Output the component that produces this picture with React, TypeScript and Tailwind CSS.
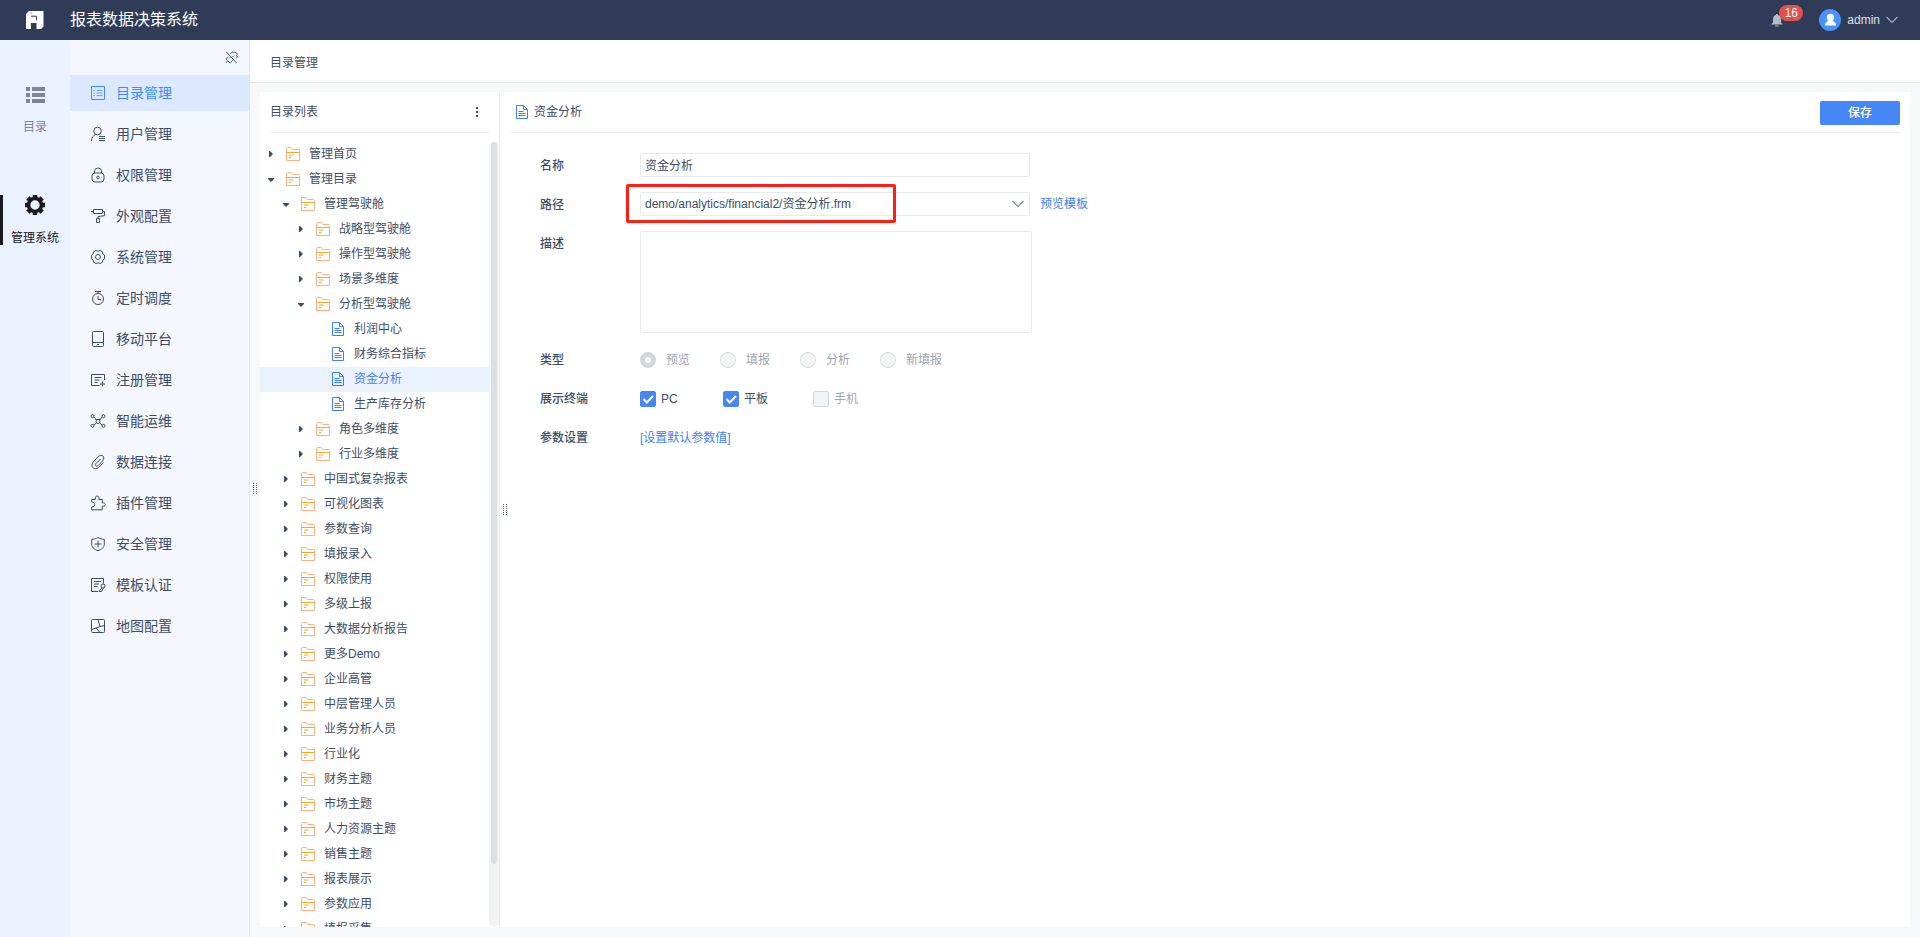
import { useState, type ReactNode } from "react";

type IconProps = { children: ReactNode; className?: string };

function Icon({ children, className = "h-[14px] w-[14px]" }: IconProps) {
  return (
    <svg
      viewBox="0 0 14 14"
      fill="none"
      stroke="currentColor"
      strokeWidth="1"
      className={`shrink-0 overflow-visible ${className}`}
      aria-hidden="true"
    >
      {children}
    </svg>
  );
}

const navItems: { label: string; icon: ReactNode }[] = [
  {
    label: "目录管理",
    icon: (
      <>
        <path d="M.5.5h13v13H.5z" />
        <path d="M2.500 4.500H4M2.500 7H4M2.500 9.500H4M5.500 4.500h6M5.500 7h6M5.500 9.500h6" opacity=".7" />
      </>
    ),
  },
  {
    label: "用户管理",
    icon: (
      <>
        <circle cx="6.500" cy="4" r="3.800" />
        <path d="M.5 14c0-3.200 1.600-5.600 4.200-6.500M8 9.500h6M8 11.500h6M8 13.500h6" />
      </>
    ),
  },
  {
    label: "权限管理",
    icon: (
      <>
        <rect x="1" y="5" width="12" height="9" rx="3" />
        <path d="M3.500 5V3.200a3.500 3.200 0 0 1 7 0V5" />
        <circle cx="7" cy="9.500" r="1.300" />
      </>
    ),
  },
  {
    label: "外观配置",
    icon: <path d="M2.500.5h9v4h-9zM0 2.500h2.500M11.500 2.500h2v4.200L7 7.500v2M5.500 9.500h3v4h-3z" />,
  },
  {
    label: "系统管理",
    icon: (
      <>
        <path d="M5 .5Q7 2 9 .5l2.500 1.300Q11.300 4.300 13.500 5.200v3.600Q11.300 9.700 11.500 12.200L9 13.500Q7 12 5 13.500L2.500 12.200Q2.700 9.700.5 8.800V5.200Q2.700 4.300 2.500 1.800z" />
        <circle cx="7" cy="7" r="2.500" />
      </>
    ),
  },
  {
    label: "定时调度",
    icon: (
      <>
        <circle cx="7" cy="8" r="5.500" />
        <path d="M4 .5h6M7 .5v2M7 5v3.500h3" />
      </>
    ),
  },
  {
    label: "移动平台",
    icon: (
      <>
        <rect x="1.500" y="-.5" width="11" height="15" rx="1" />
        <path d="M1.500 10.500h11M6 12.500h2" />
      </>
    ),
  },
  {
    label: "注册管理",
    icon: (
      <path d="M8.500 12.500H.5V1.500h13v5.500M3.500 4.500h7M3.500 7h5M3.500 9.500h3M11.500 8.500v5M9 11h5" />
    ),
  },
  {
    label: "智能运维",
    icon: (
      <>
        <circle cx="1.500" cy="2.200" r="1.500" />
        <circle cx="12.500" cy="2.200" r="1.500" />
        <circle cx="1.500" cy="11.800" r="1.500" />
        <circle cx="12.500" cy="11.800" r="1.500" />
        <circle cx="7" cy="7.500" r="2" />
        <path d="M3 3l2.500 3M11 3L8.500 6M3 11l2.500-2.200M11 11L8.500 8.800M4.500 5.500h5" />
      </>
    ),
  },
  {
    label: "数据连接",
    icon: (
      <path d="M9.500 4L5 8.600c-1.500 1.800.6 3.600 2.200 2L11.500 6C15 1.500 10.500-1.500 7 1.800L3 6c-5 5.500.5 10 4.500 6.500L12.500 7.500" />
    ),
  },
  {
    label: "插件管理",
    icon: (
      <path d="M.7 6V3.500h3.800C3.800 1.500 4.600 0 6.200 0S8.400 1.500 7.700 3.500h3.600V7c1.600-.6 2.900.1 2.900 1.500s-1.300 2.100-2.900 1.500v3.800H.7v-3c2 .3 3-.6 3-2.200S2.700 5.800.7 6z" />
    ),
  },
  {
    label: "安全管理",
    icon: (
      <path d="M7 .5c2 1.300 4 1.700 6.300 1.800v5c0 3-2.500 5.200-6.300 6.400C3.200 12.500.7 10.300.7 7.300v-5C3 2.200 5 1.800 7 .5zM7 3.500v7M3.500 7h7" />
    ),
  },
  {
    label: "模板认证",
    icon: (
      <>
        <path d="M7 13.500H.5V.5h12v5M3 3.500h7M3 6h5M3 8.500h3.500" />
        <circle cx="12" cy="8" r="2" />
        <path d="M10.800 9.800L8 13.500h2.500l2-3.500" />
      </>
    ),
  },
  {
    label: "地图配置",
    icon: (
      <>
        <rect x=".5" y=".5" width="13" height="13" rx="1" />
        <path d="M7 .5L9 7.500M.5 10.500L5 9l4-1.500 4.500-1M5 9l4 4.500" />
      </>
    ),
  },
];

type TreeNode = {
  label: string;
  level: number;
  kind: "open" | "closed" | "file";
};

const treeNodes: TreeNode[] = [
  { label: "管理首页", level: 0, kind: "closed" },
  { label: "管理目录", level: 0, kind: "open" },
  { label: "管理驾驶舱", level: 1, kind: "open" },
  { label: "战略型驾驶舱", level: 2, kind: "closed" },
  { label: "操作型驾驶舱", level: 2, kind: "closed" },
  { label: "场景多维度", level: 2, kind: "closed" },
  { label: "分析型驾驶舱", level: 2, kind: "open" },
  { label: "利润中心", level: 3, kind: "file" },
  { label: "财务综合指标", level: 3, kind: "file" },
  { label: "资金分析", level: 3, kind: "file" },
  { label: "生产库存分析", level: 3, kind: "file" },
  { label: "角色多维度", level: 2, kind: "closed" },
  { label: "行业多维度", level: 2, kind: "closed" },
  { label: "中国式复杂报表", level: 1, kind: "closed" },
  { label: "可视化图表", level: 1, kind: "closed" },
  { label: "参数查询", level: 1, kind: "closed" },
  { label: "填报录入", level: 1, kind: "closed" },
  { label: "权限使用", level: 1, kind: "closed" },
  { label: "多级上报", level: 1, kind: "closed" },
  { label: "大数据分析报告", level: 1, kind: "closed" },
  { label: "更多Demo", level: 1, kind: "closed" },
  { label: "企业高管", level: 1, kind: "closed" },
  { label: "中层管理人员", level: 1, kind: "closed" },
  { label: "业务分析人员", level: 1, kind: "closed" },
  { label: "行业化", level: 1, kind: "closed" },
  { label: "财务主题", level: 1, kind: "closed" },
  { label: "市场主题", level: 1, kind: "closed" },
  { label: "人力资源主题", level: 1, kind: "closed" },
  { label: "销售主题", level: 1, kind: "closed" },
  { label: "报表展示", level: 1, kind: "closed" },
  { label: "参数应用", level: 1, kind: "closed" },
  { label: "填报采集", level: 1, kind: "closed" },
];

const indent = ["pl-[7px]", "pl-[22px]", "pl-[37px]", "pl-[52px]"];

function FolderIcon() {
  return (
    <Icon className="h-[14px] w-[14px] text-[#f7b27c]">
      <path d="M.5 13.500V1.500a1 1 0 0 1 1-1h3.800l1.500 2h5.700a1 1 0 0 1 1 1v10z" />
      <path d="M1 5.500h12M3 8h4.500M3 10.500h2" stroke="#f5a623" />
    </Icon>
  );
}

function FileIcon() {
  return (
    <Icon className="h-[14px] w-[14px] text-[#3f7ff5]">
      <path d="M1.500.5h7l4 4v9h-11zM8.500.5v4h4M3.500 6.500h5M3.500 8.500h7M3.500 10.500h7" />
    </Icon>
  );
}

function Caret({ kind }: { kind: TreeNode["kind"] }) {
  return (
    <svg viewBox="0 0 8 8" className="h-2 w-2 shrink-0 fill-[#3d4d66]" aria-hidden="true">
      {kind === "closed" && <path d="M2 1h1l3 3-3 3H2z" />}
      {kind === "open" && <path d="M1 3h6v1L4 7 1 4z" />}
    </svg>
  );
}

function Splitter() {
  return (
    <svg viewBox="0 0 4 12" className="h-3 w-1 fill-[#5b6780]" aria-hidden="true">
      {[0, 2, 4, 6, 8, 10].map((y) => (
        <path key={y} d={`M0 ${y}h1v1H0zM3 ${y}h1v1H3z`} />
      ))}
    </svg>
  );
}

function Header() {
  return (
    <header className="flex h-10 shrink-0 items-center bg-[#2f3b57] text-white">
      <div className="flex w-[70px] shrink-0 justify-center">
        <svg viewBox="0 0 20 20" className="h-5 w-5" aria-hidden="true">
          <path d="M4 1h14.500v15.500L16 19h-4.500v-6H6v6H1V4z" fill="#fff" />
          <path d="M6 6.200h5.500v4" fill="none" stroke="#2f3b57" strokeWidth="1" />
          <path d="M6 1v3.500" fill="none" stroke="#2f3b57" strokeWidth="1" opacity=".4" />
        </svg>
      </div>
      <h1 className="text-base">报表数据决策系统</h1>
      <div className="ml-auto flex items-center pr-[22px] text-xs">
        <button type="button" aria-label="消息" className="relative h-6 w-8">
          <svg viewBox="0 0 12 13" className="absolute top-1.5 left-0 h-[13px] w-3 fill-[#b4bbc9]" aria-hidden="true">
            <path d="M6 0c.6 0 1 .4 1 1 2 .5 3 2 3 4v3.500l1.500 1.500v.5H.5V10L2 8.500V5c0-2 1-3.500 3-4 0-.6.4-1 1-1zM4 11.500h4L7.500 12.500h-3z" />
          </svg>
          <span className="absolute -top-[3px] left-2 h-4 w-6 rounded-full bg-[#e5504d] text-center leading-4">
            16
          </span>
        </button>
        <button type="button" className="ml-4 flex items-center text-[#dfe3ec]">
          <svg viewBox="0 0 22 22" className="h-[22px] w-[22px]" aria-hidden="true">
            <circle cx="11" cy="11" r="11" fill="#4793fb" />
            <circle cx="11.500" cy="8.500" r="3.700" fill="#fff" />
            <path d="M6 16.500c0-2.600 1.500-4 3.500-4.500h4c2 .5 3.500 1.900 3.500 4.500z" fill="#fff" />
          </svg>
          <span className="ml-1.5">admin</span>
          <svg viewBox="0 0 12 8" className="ml-1.5 h-2 w-3" fill="none" stroke="#a9b1c2" aria-hidden="true">
            <path d="M.5 1L6 6.500 11.500 1" strokeWidth="1.200" />
          </svg>
        </button>
      </div>
    </header>
  );
}

function Rail() {
  return (
    <aside className="flex w-[70px] shrink-0 flex-col bg-[#eaf1ff] pt-[42px] text-xs">
      <button type="button" className="flex h-[68px] flex-col items-center pt-[5px] text-[#7f8592]">
        <svg viewBox="0 0 19 16" className="h-4 w-[19px] fill-[#7f8592]" aria-hidden="true">
          <path d="M0 0h4v4H0zM6 0h13v4H6zM0 6h4v4H0zM6 6h13v4H6zM0 12h4v4H0zM6 12h13v4H6z" />
        </svg>
        <span className="mt-4">目录</span>
      </button>
      <button
        type="button"
        className="mt-[45px] flex h-[50px] flex-col items-center border-l-[3px] border-[#1a1a1a] pr-[3px] text-[#1a1a1a]"
      >
        <svg viewBox="0 0 20 20" className="h-5 w-5 shrink-0" aria-hidden="true">
          <circle cx="10" cy="10" r="6.500" fill="none" stroke="#1a1a1a" strokeWidth="3.600" />
          <path
            d="M10 0v4M10 16v4M0 10h4M16 10h4M2.900 2.900l2.500 2.500M14.600 14.600l2.500 2.500M2.900 17.100l2.500-2.500M14.600 5.400l2.500-2.500"
            stroke="#1a1a1a"
            strokeWidth="4.500"
          />
        </svg>
        <span className="mt-[15px]">管理系统</span>
      </button>
    </aside>
  );
}

function Nav() {
  return (
    <nav className="relative flex w-[180px] shrink-0 flex-col border-r border-[#dfe5ee] bg-[#f4f7ff] text-sm text-[#3d4d66]">
      <div className="flex h-[35px] shrink-0 items-center justify-end pr-[11px]">
        <button type="button" aria-label="取消固定">
          <Icon className="h-[13px] w-[13px]">
            <path d="M1.500 1l11 12M6 3l2-2 1.500 1c1.500-2 5 1 3 3l1 1.500L11.500 8M3.500 6L1 8.500l2 2L1 13M3 10.500l2.500 2.500 2.500-2.500M4.500 8L6 6.500M7.500 10.500L9 9M9.500 5L8 6.500" />
          </Icon>
        </button>
      </div>
      <ul className="flex flex-col gap-[5px]">
        {navItems.map((item, i) => (
          <li key={item.label}>
            <a
              href="#"
              className={`flex h-9 items-center gap-[11px] pl-[21px] ${
                i === 0 ? "bg-[#dbe8ff] text-[#3f8cff]" : ""
              }`}
            >
              <Icon>{item.icon}</Icon>
              {item.label}
            </a>
          </li>
        ))}
      </ul>
      <div className="absolute top-1/2 -right-2 -translate-y-1/2">
        <Splitter />
      </div>
    </nav>
  );
}

function TreePanel() {
  const [selected, setSelected] = useState(9);

  return (
    <section className="flex w-60 shrink-0 flex-col border-r border-[#e8eaed] bg-white">
      <div className="mx-[10px] flex h-[41px] shrink-0 items-center justify-between border-b border-[#e8eaed] pr-2">
        <h2>目录列表</h2>
        <button type="button" aria-label="更多">
          <svg viewBox="0 0 8 12" className="h-3 w-2 fill-[#3d4d66]" aria-hidden="true">
            <path d="M3 1h2v2H3zM3 5h2v2H3zM3 9h2v2H3z" />
          </svg>
        </button>
      </div>
      <div className="mt-[9px] flex min-h-0 flex-1">
        <ul className="min-w-0 flex-1 overflow-y-auto [scrollbar-width:none]">
          {treeNodes.map((node, i) => (
            <li key={node.label}>
              <button
                type="button"
                onClick={() => setSelected(i)}
                className={`flex h-[25px] w-full items-center pb-0.5 ${indent[node.level]} ${
                  i === selected ? "bg-[#eaf1ff] text-[#3f7ff5]" : ""
                }`}
              >
                <Caret kind={node.kind} />
                <span className="mr-[9px] ml-[11px]">
                  {node.kind === "file" ? <FileIcon /> : <FolderIcon />}
                </span>
                {node.label}
              </button>
            </li>
          ))}
        </ul>
        <div className="w-[10px] shrink-0 rounded-full bg-[#f2f3f4] px-0.5">
          <div className="h-[92%] rounded-full bg-[#dcdee1]" />
        </div>
      </div>
    </section>
  );
}

function Row({ label, htmlFor, children }: { label: string; htmlFor?: string; children: ReactNode }) {
  return (
    <div className="flex min-h-6">
      <label htmlFor={htmlFor} className="w-[100px] shrink-0 pt-px font-medium leading-6">
        {label}
      </label>
      {children}
    </div>
  );
}

const types = ["预览", "填报", "分析", "新填报"];

const terminals = [
  { label: "PC", checked: true, width: "w-[83px]" },
  { label: "平板", checked: true, width: "w-[90px]" },
  { label: "手机", checked: false, width: "" },
];

function Terminal({ label, checked, width }: (typeof terminals)[number]) {
  return (
    <label className={`flex items-center gap-[5px] ${width} ${checked ? "" : "text-[#9ea6b3]"}`}>
      <span className="relative h-4 w-4">
        <input
          type="checkbox"
          defaultChecked={checked}
          disabled={!checked}
          className="peer block h-4 w-4 appearance-none rounded-xs border border-[#d3d6dd] bg-[#f2f4f8] checked:border-[#4786f7] checked:bg-[#4786f7]"
        />
        <svg
          viewBox="0 0 16 16"
          className="pointer-events-none absolute inset-0 hidden h-4 w-4 peer-checked:block"
          fill="none"
          stroke="#fff"
          strokeWidth="2"
          aria-hidden="true"
        >
          <path d="M3.500 8l3.300 3.500L13 5" />
        </svg>
      </span>
      {label}
    </label>
  );
}

function DetailPanel() {
  return (
    <section className="min-w-0 flex-1 bg-white pr-[10px]">
      <div className="flex h-[41px] items-center border-b border-[#e8eaed] pl-[5px]">
        <FileIcon />
        <h2 className="ml-[5px]">资金分析</h2>
        <button type="button" className="mt-px ml-auto h-6 w-20 rounded-xs bg-[#4786f7] font-medium text-white">
          保存
        </button>
      </div>

      <form className="flex flex-col gap-[14px] pt-5 pl-[30px]">
        <Row label="名称" htmlFor="name">
          <input
            id="name"
            defaultValue="资金分析"
            className="h-6 w-[390px] rounded-xs border border-[#e8eaed] px-1 pb-0.5"
          />
        </Row>
        <Row label="路径" htmlFor="path">
          <div className="relative w-[390px]">
            <select
              id="path"
              className="h-6 w-full appearance-none rounded-xs border border-[#e8eaed] px-1"
            >
              <option>demo/analytics/financial2/资金分析.frm</option>
            </select>
            <svg
              viewBox="0 0 12 8"
              className="pointer-events-none absolute top-2 right-1.5 h-2 w-3"
              fill="none"
              stroke="#7f8592"
              aria-hidden="true"
            >
              <path d="M.5 1L6 6.500 11.500 1" strokeWidth="1.200" />
            </svg>
            <div className="pointer-events-none absolute -top-2 -left-[14px] h-[39px] w-[270px] rounded-xs border-[3px] border-[#ff1f14]" />
          </div>
          <a href="#" className="ml-[10px] leading-6 text-[#3f7ff5]">
            预览模板
          </a>
        </Row>
        <Row label="描述" htmlFor="description">
          <textarea
            id="description"
            className="block h-[102px] w-[392px] resize-none rounded-xs border border-[#e8eaed] p-1"
          />
        </Row>
        <Row label="类型">
          <div className="flex text-[#9ea6b3]">
            {types.map((type, i) => (
              <label key={type} className="flex w-20 items-center gap-[10px]">
                <input
                  type="radio"
                  name="type"
                  disabled
                  defaultChecked={i === 0}
                  className="h-4 w-4 appearance-none rounded-full border border-[#d3d6dd] bg-[#f2f4f8] checked:border-5 checked:bg-white"
                />
                {type}
              </label>
            ))}
          </div>
        </Row>
        <Row label="展示终端">
          {terminals.map((t) => (
            <Terminal key={t.label} {...t} />
          ))}
        </Row>
        <Row label="参数设置">
          <a href="#" className="pt-px leading-6 text-[#3f7ff5]">
            [设置默认参数值]
          </a>
        </Row>
      </form>
    </section>
  );
}

export default function App() {
  return (
    <div className="flex h-screen flex-col overflow-hidden bg-[#f6f8fa] font-['Liberation_Sans','Noto_Sans_CJK_SC',sans-serif] text-xs text-[#3d4d66]">
      <Header />
      <div className="flex min-h-0 flex-1">
        <Rail />
        <Nav />
        <main className="flex min-w-0 flex-1 flex-col">
          <div className="flex h-[43px] shrink-0 items-center border-b border-[#e8eaed] bg-white px-5 pt-1">
            目录管理
          </div>
          <div className="flex min-h-0 flex-1 pt-[9px] pr-[10px] pb-[10px] pl-[10px]">
            <TreePanel />
            <div className="flex w-[10px] shrink-0 items-center justify-center bg-white">
              <Splitter />
            </div>
            <DetailPanel />
          </div>
        </main>
      </div>
    </div>
  );
}
